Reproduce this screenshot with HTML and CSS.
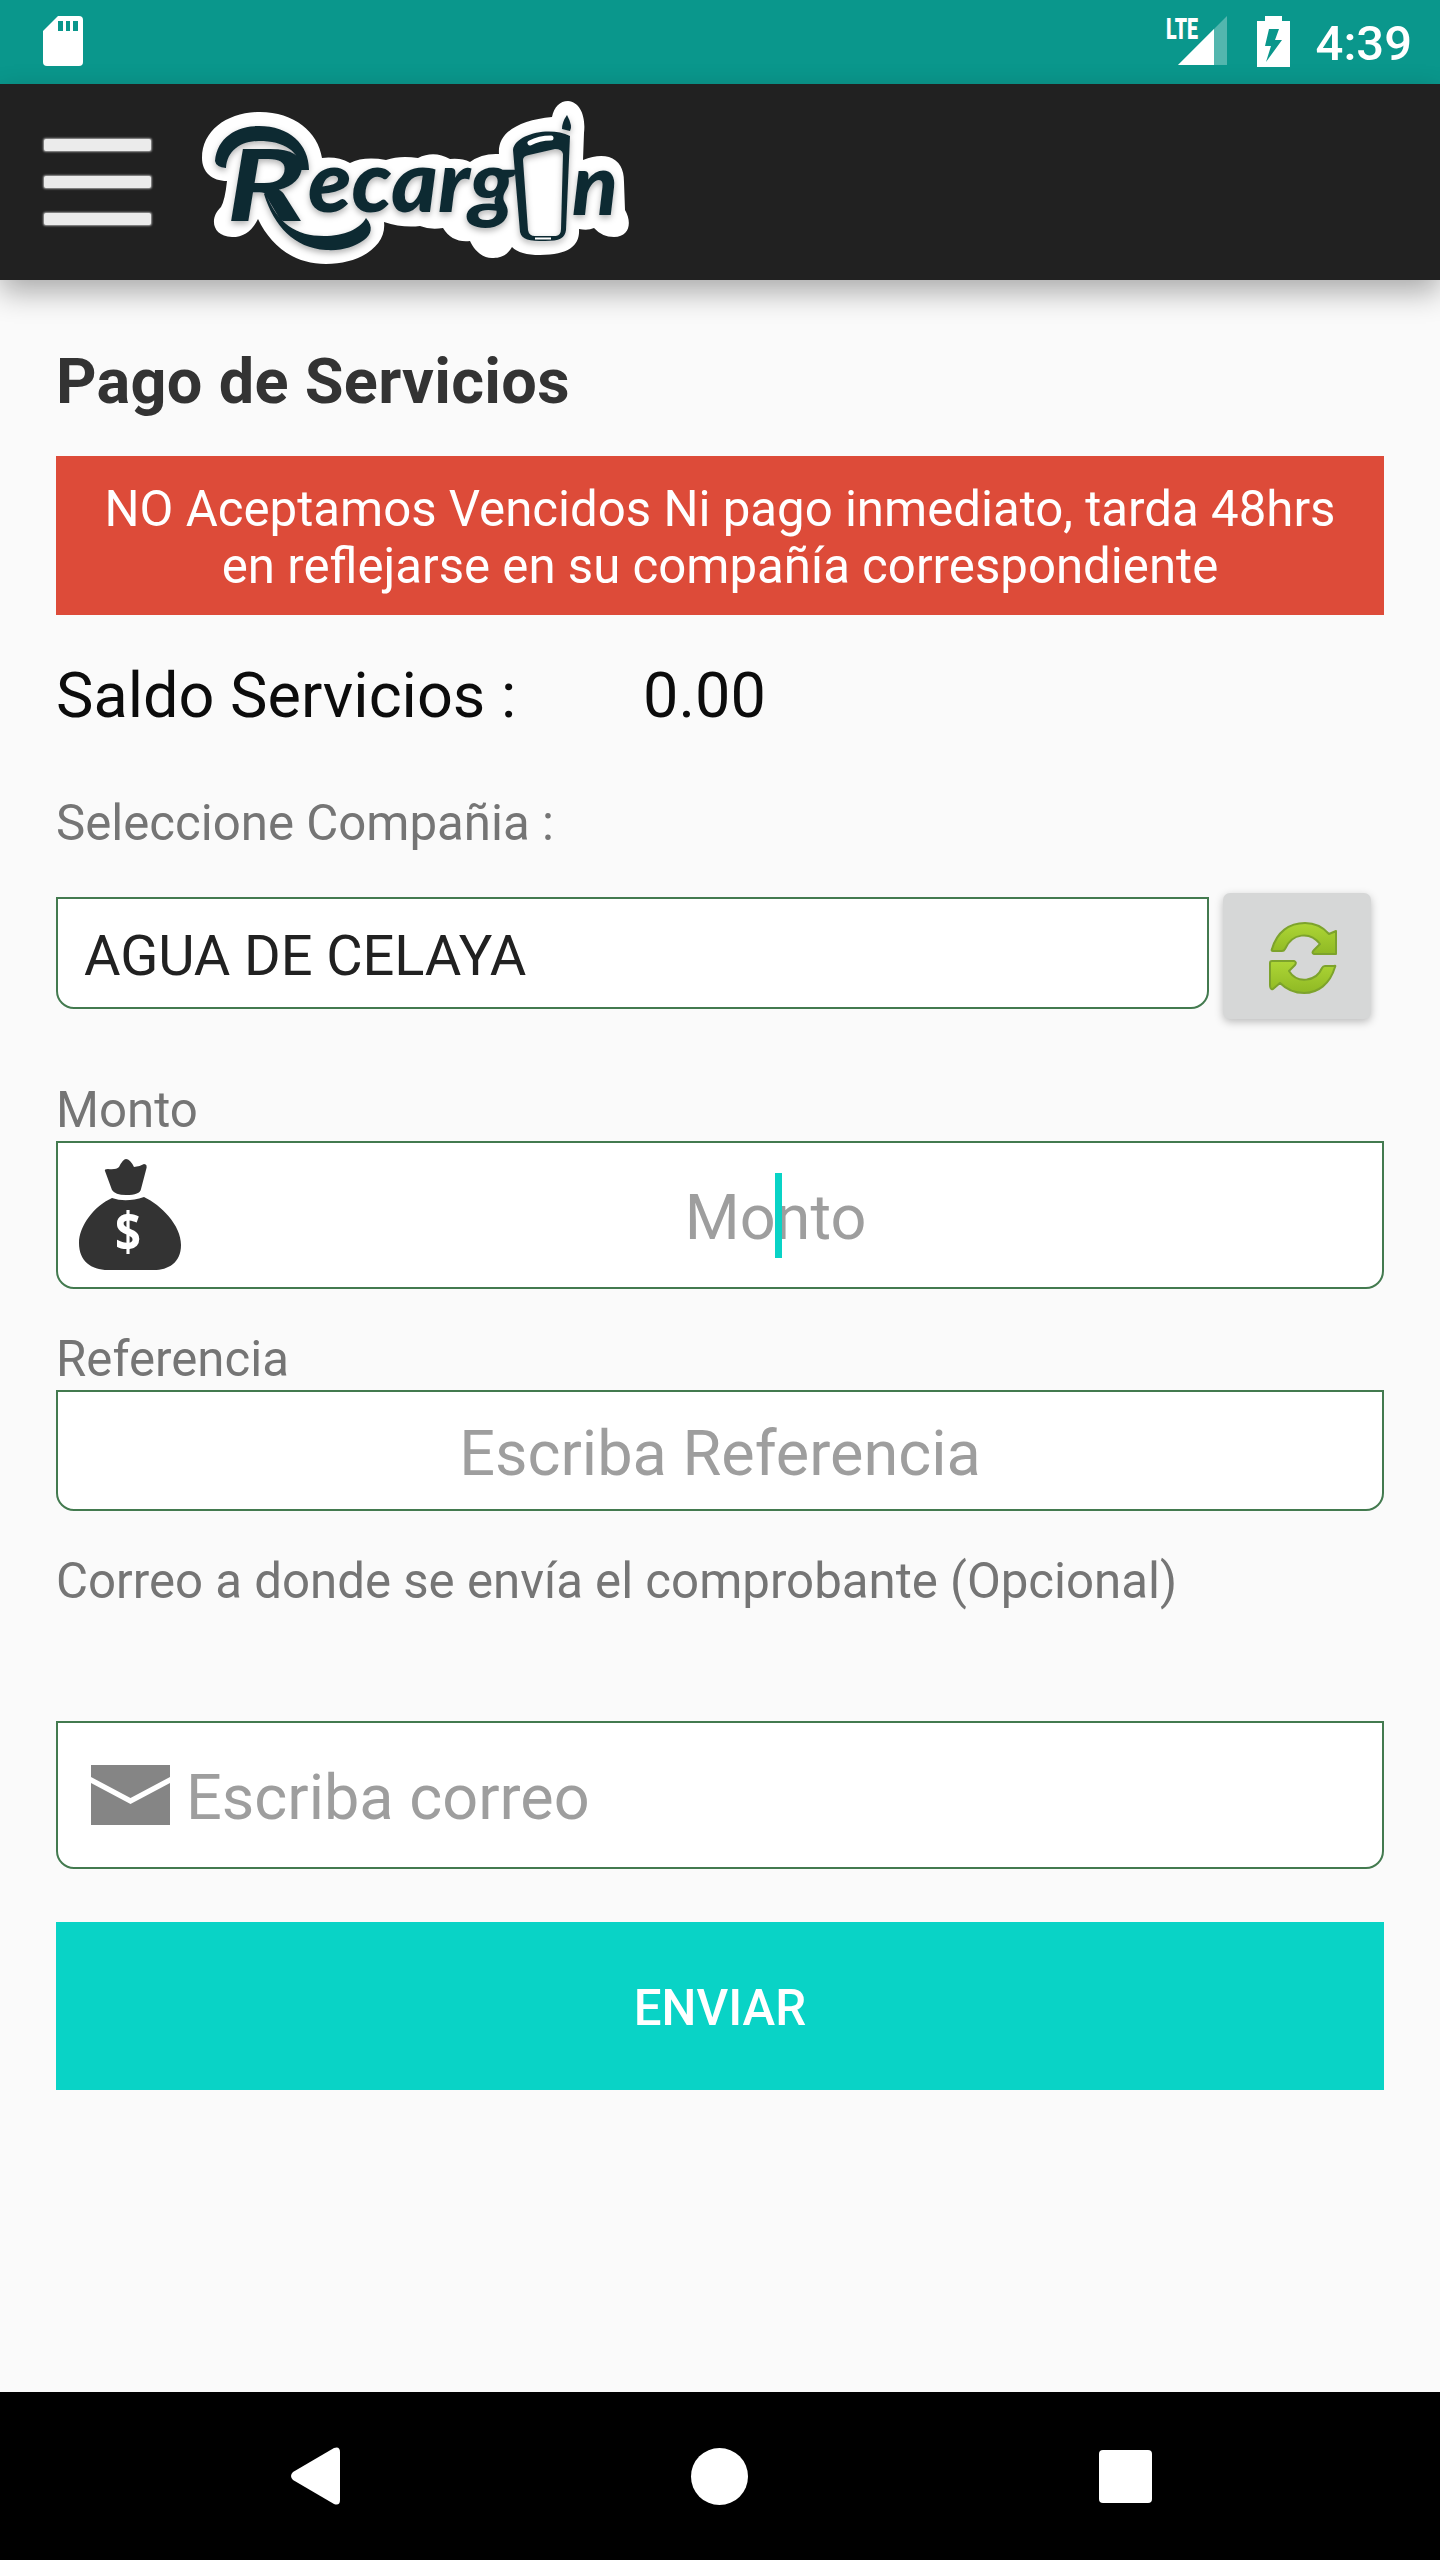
FILE: index.html
```html
<!DOCTYPE html>
<html lang="es">

<head>
    <meta charset="UTF-8">
    <title>Recargon - Pago de Servicios</title>
    <link rel="stylesheet" href="styles.css">
</head>

<body>
    <div class="status-bar">
        <svg class="sd-icon" width="40" height="50" viewBox="0 0 40 50">
            <path fill="#fff" d="M15 0H36Q40 0 40 4V46Q40 50 36 50H4Q0 50 0 46V15Z" />
            <path fill="#0a978c" d="M15 5h5v10h-5zM23 5h4v10h-4zM30 5h5v10h-5z" />
        </svg>
        <div class="status-right">
            <svg class="signal" width="62" height="50" viewBox="0 0 62 50">
                <text class="lte" x="0" y="23" textLength="32" lengthAdjust="spacingAndGlyphs">LTE</text>
                <path fill="#fff" opacity=".3" d="M61 0V49H12Z" />
                <path fill="#fff" d="M48 13V49H12Z" />
            </svg>
            <svg class="battery" width="33" height="51" viewBox="0 0 33 51">
                <path fill="#fff" d="M8 0H25V5H33V51H0V5H8Z" />
                <path fill="#0a978c" d="M12 13H22L18 24H25L9 46L14 30H8Z" />
            </svg>
            <span class="clock">4:39</span>
        </div>
    </div>

    <header class="app-bar">
        <div class="menu">
            <span></span>
            <span></span>
            <span></span>
        </div>
        <svg class="logo" width="430" height="166" viewBox="200 100 430 166">
            <defs>
                <filter id="soft" x="-10%" y="-10%" width="120%" height="130%">
                    <feDropShadow dx="0" dy="3" stdDeviation="3" flood-color="#000" flood-opacity=".3" />
                </filter>
            </defs>
            <!-- white sticker behind the name -->
            <path fill="#fff" d="M202 158C202 130 228 112 260 112C294 112 318 132 322 158Q337 156 350 163Q364 156 386 160Q400 155 418 158Q434 150 450 159Q462 158 470 162Q482 153 499 154C497 132 520 120 552 117C554 107 560 101 568 101C580 102 586 116 584 133L583 160Q598 154 609 157Q624 162 624 182L625 210C632 222 630 237 614 237Q602 237 594 228Q588 231 579 229C580 245 570 255 540 255Q520 255 512 247C506 257 499 258 492 258C482 258 474 250 470 241Q452 243 443 228Q430 230 420 226Q402 228 384 222C387 246 360 264 326 264C292 264 270 244 258 219C252 231 244 237 232 237C212 236 209 218 221 207Q225 200 227 181C212 181 202 172 202 158Z" />
            <g filter="url(#soft)">
                <path class="ink" d="M215 161C217 138 236 126 259 126C289 126 309 144 309 170H300C300 151 284 141 259 141C240 141 227 151 226 168Q216 167 215 161Z" />
                <path class="ink" d="M266 194C278 224 296 236 324 236C344 236 360 229 366 218C374 227 371 235 364 240C354 247 342 251 326 250C294 248 274 226 264 194Z" />
                <text class="logo-cap" x="226" y="221" textLength="80" lengthAdjust="spacingAndGlyphs">R</text>
                <text class="logo-text" x="308" y="212" textLength="207" lengthAdjust="spacingAndGlyphs">ecarg</text>
                <!-- phone with a flame on top -->
                <path class="ink" fill-rule="evenodd" d="M513 150C515 134 550 126 570 136L566 230C565 238 560 241 545 241C529 241 522 240 520 232ZM523 160L528 230Q529 236 535 236L556 236Q561 235 561 229L563 154Q562 149 555 149L529 155Q523 156 523 160Z" />
                <path class="ink" d="M567 115Q573 126 570 131L562 129Q562 122 567 115Z" />
                <text class="logo-text" x="572" y="215" textLength="46" lengthAdjust="spacingAndGlyphs">n</text>
            </g>
            <path stroke="#fff" stroke-width="5" stroke-linecap="round" fill="none" d="M530 143Q539 138 551 138" />
            <path stroke="#fff" stroke-width="2" d="M535 238.500H551" />
        </svg>
    </header>

    <main class="content">
        <h1>Pago de Servicios</h1>
        <div class="warning">NO Aceptamos Vencidos Ni pago inmediato, tarda 48hrs en reflejarse en su compañía correspondiente</div>
        <div class="balance">
            <span class="balance-label">Saldo Servicios :</span>
            <span>0.00</span>
        </div>

        <label class="company-label">Seleccione Compañia :</label>
        <div class="company-row">
            <div class="box company">AGUA DE CELAYA</div>
            <button type="button" class="refresh">
                <svg width="70" height="74" viewBox="0 0 70 74">
                    <defs>
                        <linearGradient id="green" x1="0" y1="0" x2="0" y2="1">
                            <stop offset="0" stop-color="#aed636" />
                            <stop offset="1" stop-color="#8fb924" />
                        </linearGradient>
                    </defs>
                    <g fill="url(#green)" stroke="#7da32c" stroke-width="2" stroke-linejoin="round">
                        <path d="M4 28C9 11 21 2 37 2C47 2 55 6 61 13L68 10V33H46Q43 32 46 29L52 23C42 10 24 12 17 28Q16 30 14 30H5Q3 30 4 28Z" />
                        <path d="M67 46C62 63 50 72 36 72C25 72 18 68 12 62L5 68Q2 69 2 64V42Q2 40 4 40H26Q29 41 27 44L21 50C29 63 48 61 54 47Q55 45 57 45H66Q68 44 67 46Z" />
                    </g>
                </svg>
            </button>
        </div>

        <label class="amount-label">Monto</label>
        <div class="box amount">
            <svg class="money" width="104" height="112" viewBox="0 0 104 112">
                <path fill="#333" d="M26 12Q25 10 29 10Q37 11 40 8Q44 0 47 0Q51 0 55 8Q60 8 65 5Q69 5 67 11L62 30Q61 36 47 36Q36 36 33 31ZM33 39Q47 44 65 38C82 46 102 66 102 86C102 104 89 111 75 111H29C12 111 0 102 0 84C0 67 15 47 33 39Z" />
                <text class="dollar" x="36" y="92" textLength="26" lengthAdjust="spacingAndGlyphs">$</text>
            </svg>
            <div class="amount-hint">Monto<span class="caret"></span></div>
        </div>

        <label class="reference-label">Referencia</label>
        <div class="box reference">Escriba Referencia</div>

        <label class="mail-label">Correo a donde se envía el comprobante (Opcional)</label>
        <div class="box mail">
            <svg width="79" height="60" viewBox="0 0 79 60">
                <path fill="#858585" d="M0 0H79V12L39.500 33L0 12ZM0 18L39.500 39L79 18V60H0Z" />
            </svg>
            <span>Escriba correo</span>
        </div>

        <button type="submit" class="send">ENVIAR</button>
    </main>

    <nav class="nav-bar">
        <svg width="49" height="58" viewBox="0 0 49 58">
            <path fill="#fff" d="M2 25L43 1Q49-1 49 5V53Q49 59 43 57L2 33Q-2 29 2 25Z" />
        </svg>
        <div class="home"></div>
        <div class="recents"></div>
    </nav>
</body>

</html>
```
FILE: styles.css
```css
* {
    margin: 0;
    padding: 0;
    box-sizing: border-box;
}

body {
    display: flex;
    flex-direction: column;
    height: 2560px;
    background: #fafafa;
    font-family: Roboto, sans-serif;
    font-size: 49.2px;
    line-height: 57px;
}

.status-bar {
    display: flex;
    justify-content: space-between;
    height: 84px;
    padding: 16px 28px 0 43px;
    background: #0a978c;
}

.status-right {
    display: flex;
}

.signal {
    overflow: visible;
}

.lte {
    font: 900 29px Roboto, sans-serif;
    fill: #fff;
}

.battery {
    margin-left: 29px;
}

.clock {
    margin-left: 26px;
    color: #fff;
    font-size: 49px;
    font-weight: 500;
    line-height: 56px;
}

.app-bar {
    display: flex;
    height: 196px;
    padding: 16px 43px;
    background: #212121;
    box-shadow: 0 12px 28px rgba(0, 0, 0, 0.32);
}

.menu {
    display: flex;
    flex-direction: column;
    gap: 25px;
    width: 109px;
    padding: 39px 1px 0;
}

.menu span {
    height: 12px;
    border-radius: 2px;
    background: #ebebeb;
    box-shadow: 0 0 2px 1px #a0a0a0;
}

.logo {
    margin-left: 48px;
}

.ink,
.logo-cap,
.logo-text {
    fill: #112a33;
}

.logo-cap {
    font: italic 700 100px Lato, sans-serif;
}

.logo-text {
    font: italic 900 86px Lato, sans-serif;
}

.content {
    display: flex;
    flex-direction: column;
    flex: 1;
    padding: 65px 56px 0;
}

h1 {
    color: #333;
    font-size: 63px;
    letter-spacing: 0.3px;
    line-height: 74px;
}

.warning {
    height: 159px;
    margin-top: 37px;
    padding: 25px 26px;
    background: #dd4b39;
    color: #fff;
    text-align: center;
}

.balance {
    display: flex;
    margin-top: 44px;
    color: #0c0c0c;
    font-size: 63px;
    line-height: 74px;
}

.balance-label {
    width: 587px;
}

label {
    color: #757575;
}

.company-label {
    margin-top: 62px;
}

.box {
    display: flex;
    align-items: center;
    border: 2px solid #437a4f;
    border-radius: 0 0 18px 18px;
    background: #fff;
    color: #9e9e9e;
    font-size: 63px;
}

.company-row {
    display: flex;
    margin-top: 41px;
}

.company {
    width: 1153px;
    height: 112px;
    margin-top: 4px;
    padding: 7px 26px 0;
    color: #212121;
    font-size: 56px;
    letter-spacing: -0.1px;
}

.refresh {
    display: flex;
    width: 148px;
    height: 126px;
    margin: 0 0 0 14px;
    padding: 28px 0 0 45px;
    border: none;
    border-radius: 7px;
    background: #d6d7d7;
    box-shadow: 0 3px 8px rgba(0, 0, 0, 0.25);
}

.amount-label {
    margin-top: 63px;
}

.amount {
    height: 148px;
    margin-top: 2px;
    padding-left: 21px;
}

.amount-hint {
    position: relative;
    flex: 1;
    padding: 4px 14px 0 0;
    text-align: center;
}

.caret {
    position: absolute;
    top: -12px;
    left: 592px;
    width: 7px;
    height: 85px;
    background: #09d3c6;
}

.dollar {
    font: bold 54px "Open Sans", sans-serif;
    fill: #fff;
}

.reference-label {
    margin-top: 42px;
}

.reference {
    justify-content: center;
    height: 121px;
    margin-top: 2px;
    padding-top: 6px;
}

.mail-label {
    margin-top: 42px;
}

.mail {
    gap: 16px;
    height: 148px;
    margin-top: 111px;
    padding-left: 33px;
}

.mail span {
    padding-top: 4px;
}

.send {
    height: 168px;
    margin-top: 53px;
    padding-top: 4px;
    border: none;
    background: #09d3c6;
    color: #fff;
    font-family: Roboto, sans-serif;
    font-size: 49.2px;
    font-weight: 500;
}

.nav-bar {
    display: flex;
    align-items: center;
    justify-content: space-between;
    height: 168px;
    padding: 0 288px 0 291px;
    background: #000;
}

.home {
    width: 57px;
    height: 57px;
    border-radius: 50%;
    background: #fff;
}

.recents {
    width: 53px;
    height: 53px;
    border-radius: 4px;
    background: #fff;
}
```
